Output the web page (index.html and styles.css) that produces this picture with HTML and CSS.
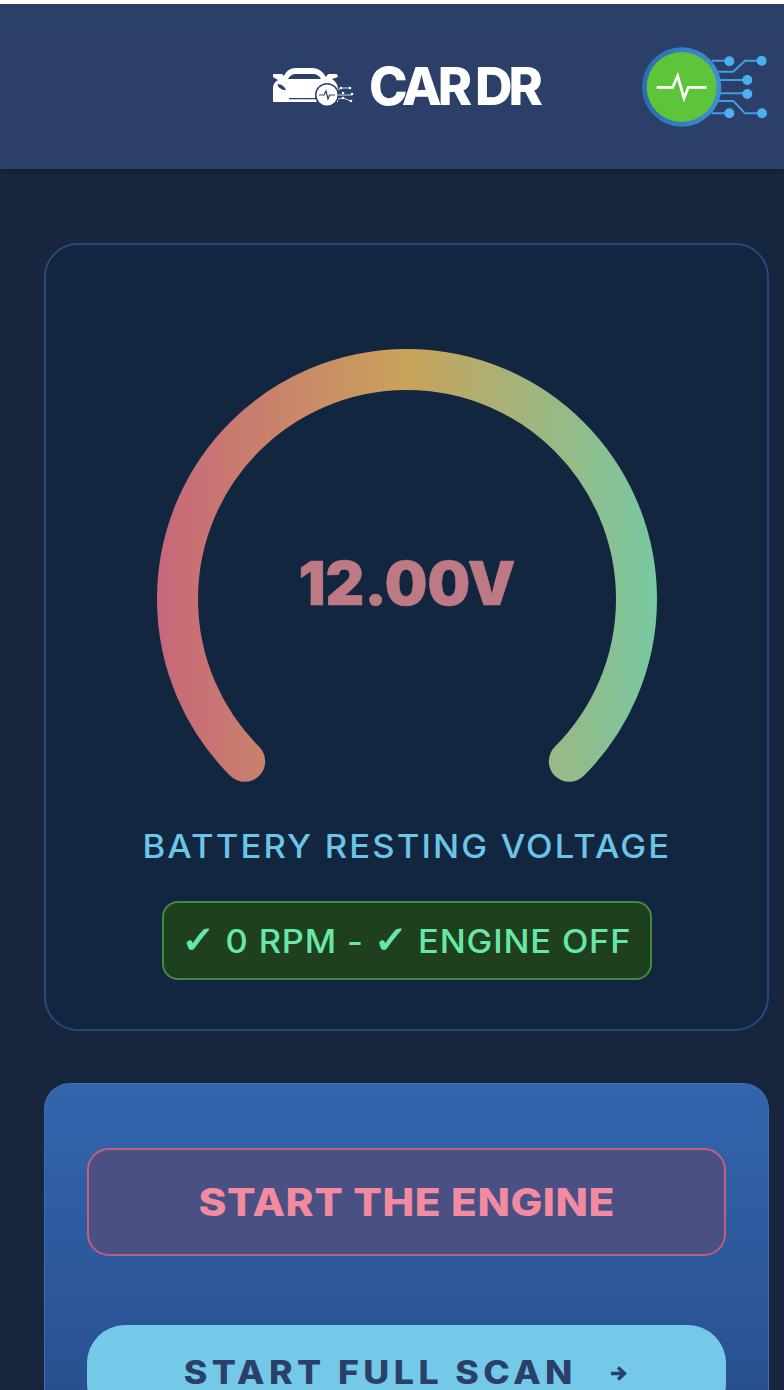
FILE: index.html
```html
<!DOCTYPE html>
<html lang="en">
<head>
    <meta charset="UTF-8">
    <meta name="viewport" content="width=device-width, initial-scale=1.0">
    <title>Car Dr</title>
    <link rel="stylesheet" href="styles.css">
</head>
<body>

    <!-- Header -->
    <header>
        <div class="logo">
            <svg class="logo-car" viewBox="0 0 84 38" width="84" height="38">
                <path fill="#fff" d="M1 6h9l2 2c2-4 5-8 12-8h16c7 0 11 4 14 9l2-3h9l1 3-6 2c3 2 6 5 6 10v13H1V20c0-4 2-6 5-8L1 9z"/>
                <path fill="#2c3f69" d="M16 11c2-3.500 4-5 9-5h15c5 0 7 1.500 9 5zM5.500 16c4 0 7.500 3 8.500 6-4 0-8-2-8.500-6zM17 30h28v1.200H17z"/>
                <circle cx="55" cy="27" r="12" fill="#2c3f69"/>
                <circle cx="55" cy="27" r="10.500" fill="#fff"/>
                <path fill="none" stroke="#2c3f69" stroke-width="1.200" d="M47 27h5l2-4 2 8 1.500-4H63"/>
                <g fill="#fff">
                    <circle cx="69" cy="20" r="1.300"/><circle cx="78" cy="20" r="1.300"/>
                    <circle cx="71" cy="25" r="1.300"/><circle cx="80" cy="26" r="1.300"/>
                    <circle cx="71" cy="30" r="1.300"/><circle cx="79" cy="33" r="1.300"/>
                </g>
                <path fill="none" stroke="#fff" stroke-width="0.800" d="M66 22l3-2h9M66 27h14M66 31l5-1 8 3"/>
            </svg>
            <span class="logo-text">CAR DR</span>
        </div>
        <svg class="status-icon" viewBox="0 0 462 330" width="154" height="110">
            <defs>
                <linearGradient id="ringFill" x1="0" y1="0" x2="1" y2="0">
                    <stop offset="0" stop-color="#2c6db3"/>
                    <stop offset="1" stop-color="#3f8fd0"/>
                </linearGradient>
            </defs>
            <g fill="none" stroke="#3f9fe0" stroke-width="6">
                <path d="M245 92h53M265 125h45l35-33h50M270 150h80M270 190h80M265 213h45l35 37h50M245 250h53"/>
            </g>
            <g fill="#4ab0ee">
                <circle cx="298" cy="94" r="15"/><circle cx="395" cy="92" r="15"/>
                <circle cx="352" cy="150" r="15"/><circle cx="352" cy="192" r="15"/>
                <circle cx="298" cy="250" r="15"/><circle cx="396" cy="250" r="15"/>
            </g>
            <circle cx="155" cy="171" r="119" fill="url(#ringFill)"/>
            <circle cx="155" cy="171" r="105" fill="#5ec43a"/>
            <path fill="none" stroke="#fff" stroke-width="8" d="M80 172h48l15-34 19 67 13-33h55"/>
        </svg>
    </header>

    <!-- Main Content Area -->
    <main>
        <section class="gauge-card">
            <svg class="gauge" viewBox="0 0 500 434" width="500" height="434">
                <defs>
                    <linearGradient id="gaugeFill" gradientUnits="userSpaceOnUse" x1="0" y1="0" x2="500" y2="0">
                        <stop offset="0" stop-color="#c8677a"/>
                        <stop offset="0.5" stop-color="#c9a35a"/>
                        <stop offset="1" stop-color="#78c8a2"/>
                    </linearGradient>
                </defs>
                <path fill="none" stroke="url(#gaugeFill)" stroke-width="41" stroke-linecap="round" d="M87.700 412.300A229.500 229.500 0 1 1 412.300 412.300"/>
                <text class="gauge-value" x="250" y="256" text-anchor="middle">12.00V</text>
            </svg>
            <p class="gauge-label">BATTERY RESTING VOLTAGE</p>
            <div class="badge"><span class="badge-text"><span class="tick">✓</span> 0 RPM - <span class="tick">✓</span> ENGINE OFF</span></div>
        </section>

        <section class="action-card">
            <button class="engine-button"><span class="wide">START THE ENGINE</span></button>
            <button class="scan-button">
                <span class="wide">START FULL SCAN</span>
                <svg class="arrow" viewBox="0 0 16 15" width="16" height="15">
                    <path fill="none" stroke="#2b4068" stroke-width="3.500" d="M0 7.500h13M7 1.500l6.500 6-6.500 6"/>
                </svg>
            </button>
        </section>
    </main>

</body>
</html>
```

FILE: styles.css
```css
/* Basic Styling */
html, body {
    height: 100%;
    margin: 0;
    padding: 0;
    overflow: hidden;
    font-family: Inter, "Liberation Sans", sans-serif;
    background-color: #18253f;
}

body {
    border-top: 4px solid #ffffff;
    box-sizing: border-box;
}

/* Header */
header {
    height: 165px;
    background: #2c3f69;
    display: flex;
    align-items: center;
    padding-left: 272px;
    box-sizing: border-box;
    box-shadow: 0 2px 3px rgba(0, 0, 0, 0.15);
}

.logo {
    display: flex;
    align-items: center;
    gap: 13px;
}

.logo-car {
    display: block;
}

.logo-text {
    color: #ffffff;
    font-size: 52px;
    font-weight: 800;
    line-height: 38px;
    letter-spacing: -4.2px;
    white-space: pre;
}

.status-icon {
    display: block;
    margin-left: auto;
    margin-top: -3px;
}

/* Main Content Area */
main {
    padding: 74px 15px 0 44px;
    display: flex;
    flex-direction: column;
    gap: 52px;
}

.gauge-card {
    height: 788px;
    box-sizing: border-box;
    background: #12263f;
    border: 2px solid #234a7a;
    border-radius: 34px;
    padding-top: 104px;
    display: flex;
    flex-direction: column;
    align-items: center;
}

.gauge {
    display: block;
    flex: none;
}

.gauge-value {
    fill: #bd7a85;
    stroke: #bd7a85;
    stroke-width: 0.6px;
    font-family: Inter, sans-serif;
    font-size: 60px;
    font-weight: 900;
}

.gauge-label {
    margin: 44px 0 0;
    color: #6cc5e8;
    font-size: 32px;
    font-weight: 500;
    line-height: 40px;
    letter-spacing: 2px;
    white-space: nowrap;
    transform: scaleX(1.08);
}

.badge {
    margin-top: 34px;
    width: 490px;
    height: 79px;
    flex: none;
    box-sizing: border-box;
    background: #1f401f;
    border: 2px solid #3f8a46;
    border-radius: 16px;
    color: #68e8a8;
    font-size: 32px;
    font-weight: 500;
    letter-spacing: 0.8px;
    line-height: 1;
    display: flex;
    align-items: center;
    justify-content: center;
    white-space: pre;
}

.badge-text {
    display: block;
    transform: scaleX(1.075);
}

.tick {
    font-family: "DejaVu Sans", sans-serif;
    font-size: 38px;
    font-weight: bold;
    letter-spacing: 0;
    line-height: 32px;
    -webkit-text-stroke: 1px #68e8a8;
}

.action-card {
    height: 400px;
    box-sizing: border-box;
    background: linear-gradient(180deg, #3365ad, #254a88);
    border: 1px solid #3f6fb0;
    border-bottom: none;
    border-radius: 26px;
    padding: 64px 42px 0;
    display: flex;
    flex-direction: column;
    gap: 69px;
}

button {
    width: 100%;
    flex: none;
    display: flex;
    align-items: center;
    justify-content: center;
    font-family: inherit;
    cursor: pointer;
    white-space: pre;
    line-height: 1;
}

.wide {
    display: block;
    transform: scaleX(1.115);
}

.engine-button {
    height: 108px;
    background: #4a5084;
    border: 2px solid #c0607c;
    border-radius: 22px;
    color: #f28ba0;
    font-size: 38px;
    font-weight: 800;
    letter-spacing: 0.5px;
}

.scan-button {
    height: 96px;
    padding: 0 0 0 18px;
    background: #74c9e8;
    border: none;
    border-radius: 38px;
    color: #2b4068;
    font-size: 32px;
    font-weight: 800;
    letter-spacing: 4px;
    line-height: 26px;
    gap: 54px;
}

.arrow {
    display: block;
}
```
